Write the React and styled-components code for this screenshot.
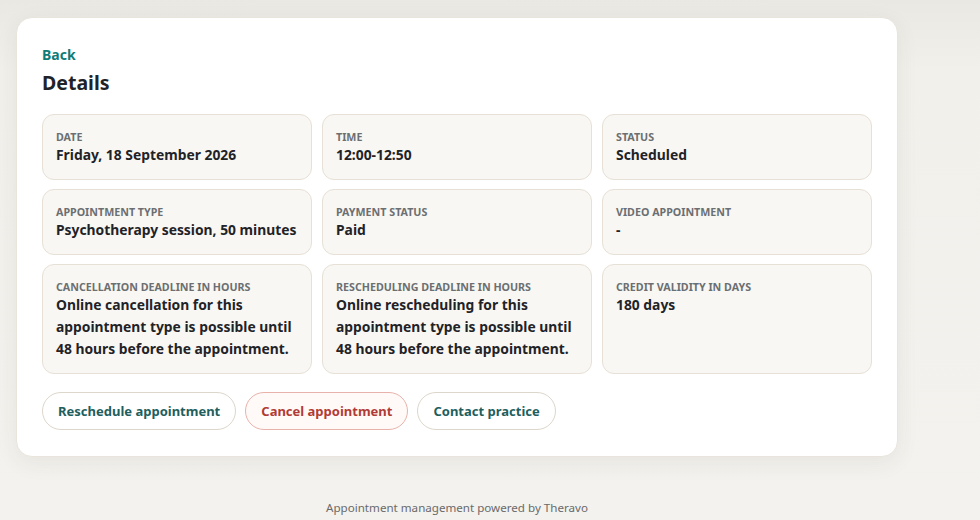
import React from "react";
import styled, { createGlobalStyle } from "styled-components";

const GlobalStyle = createGlobalStyle`
    html, body {
        margin: 0;
        padding: 0;
    }
    body {
        font-family: "Noto Sans", "Open Sans", sans-serif;
        background: linear-gradient(180deg, #e9e8e3 0px, #f1f0eb 70px, #f3f2ee 100%);
        min-height: 520px;
        color: #1f2328;
    }
`;

const Page = styled.div`
    width: 882px;
    margin-left: 16px;
    padding-top: 17px;
`;

const Card = styled.div`
    background: #fff;
    border: 1px solid #e9e5dd;
    border-radius: 16px;
    box-shadow: 0 6px 22px rgba(60, 55, 40, 0.07);
    padding: 27px 25px 26px 25px;
    box-sizing: border-box;
`;

const BackLink = styled.a`
    display: block;
    color: #0f7b76;
    font-size: 14px;
    font-weight: 700;
    line-height: 20px;
    text-decoration: none;
    cursor: pointer;
`;

const Title = styled.h1`
    margin: 4px 0 17px;
    font-size: 19.5px;
    line-height: 28px;
    font-weight: 700;
    color: #1f2328;
`;

const Grid = styled.div`
    display: grid;
    grid-template-columns: repeat(3, 1fr);
    gap: 9px 10px;
`;

const Cell = styled.div`
    background: #f9f7f3;
    border: 1px solid #e6e0d6;
    border-radius: 12px;
    padding: 15px 12px 10px 13px;
    min-height: ${({ $tall }) => ($tall ? "110px" : "66px")};
    box-sizing: border-box;
`;

const Label = styled.div`
    font-size: 10.7px;
    line-height: 14px;
    font-weight: 700;
    text-transform: uppercase;
    color: #6b6f72;
`;

const Value = styled.div`
    font-size: 13.85px;
    line-height: 22px;
    font-weight: 700;
    color: #1f2328;
`;

const Actions = styled.div`
    display: flex;
    gap: 9px;
    margin-top: 18px;
`;

const Pill = styled.button`
    font-family: inherit;
    font-size: 13px;
    font-weight: 700;
    height: 38px;
    padding: 0 15px;
    border-radius: 19px;
    cursor: pointer;
    background: ${({ $danger }) => ($danger ? "#fffaf8" : "#fff")};
    border: 1px solid ${({ $danger }) => ($danger ? "#e8b2aa" : "#ddd6cb")};
    color: ${({ $danger }) => ($danger ? "#b13b34" : "#215e5e")};
`;

const Footer = styled.footer`
    text-align: center;
    font-size: 11.6px;
    line-height: 16px;
    color: #6a6a6a;
    margin-top: 43px;
`;

const details = [
    { label: "Date", value: "Friday, 18 September 2026" },
    { label: "Time", value: "12:00-12:50" },
    { label: "Status", value: "Scheduled" },
    { label: "Appointment type", value: "Psychotherapy session, 50 minutes" },
    { label: "Payment status", value: "Paid" },
    { label: "Video appointment", value: "-" },
    {
        label: "Cancellation deadline in hours",
        value: "Online cancellation for this appointment type is possible until 48 hours before the appointment.",
        tall: true,
    },
    {
        label: "Rescheduling deadline in hours",
        value: "Online rescheduling for this appointment type is possible until 48 hours before the appointment.",
        tall: true,
    },
    { label: "Credit validity in days", value: "180 days", tall: true },
];

const App = () => {
    return (
        <>
            <GlobalStyle />
            <Page>
                <Card>
                    <BackLink>Back</BackLink>
                    <Title>Details</Title>
                    <Grid>
                        {details.map((d) => (
                            <Cell key={d.label} $tall={d.tall}>
                                <Label>{d.label}</Label>
                                <Value>{d.value}</Value>
                            </Cell>
                        ))}
                    </Grid>
                    <Actions>
                        <Pill>Reschedule appointment</Pill>
                        <Pill $danger>Cancel appointment</Pill>
                        <Pill>Contact practice</Pill>
                    </Actions>
                </Card>
                <Footer>Appointment management powered by Theravo</Footer>
            </Page>
        </>
    );
};

export default App;
